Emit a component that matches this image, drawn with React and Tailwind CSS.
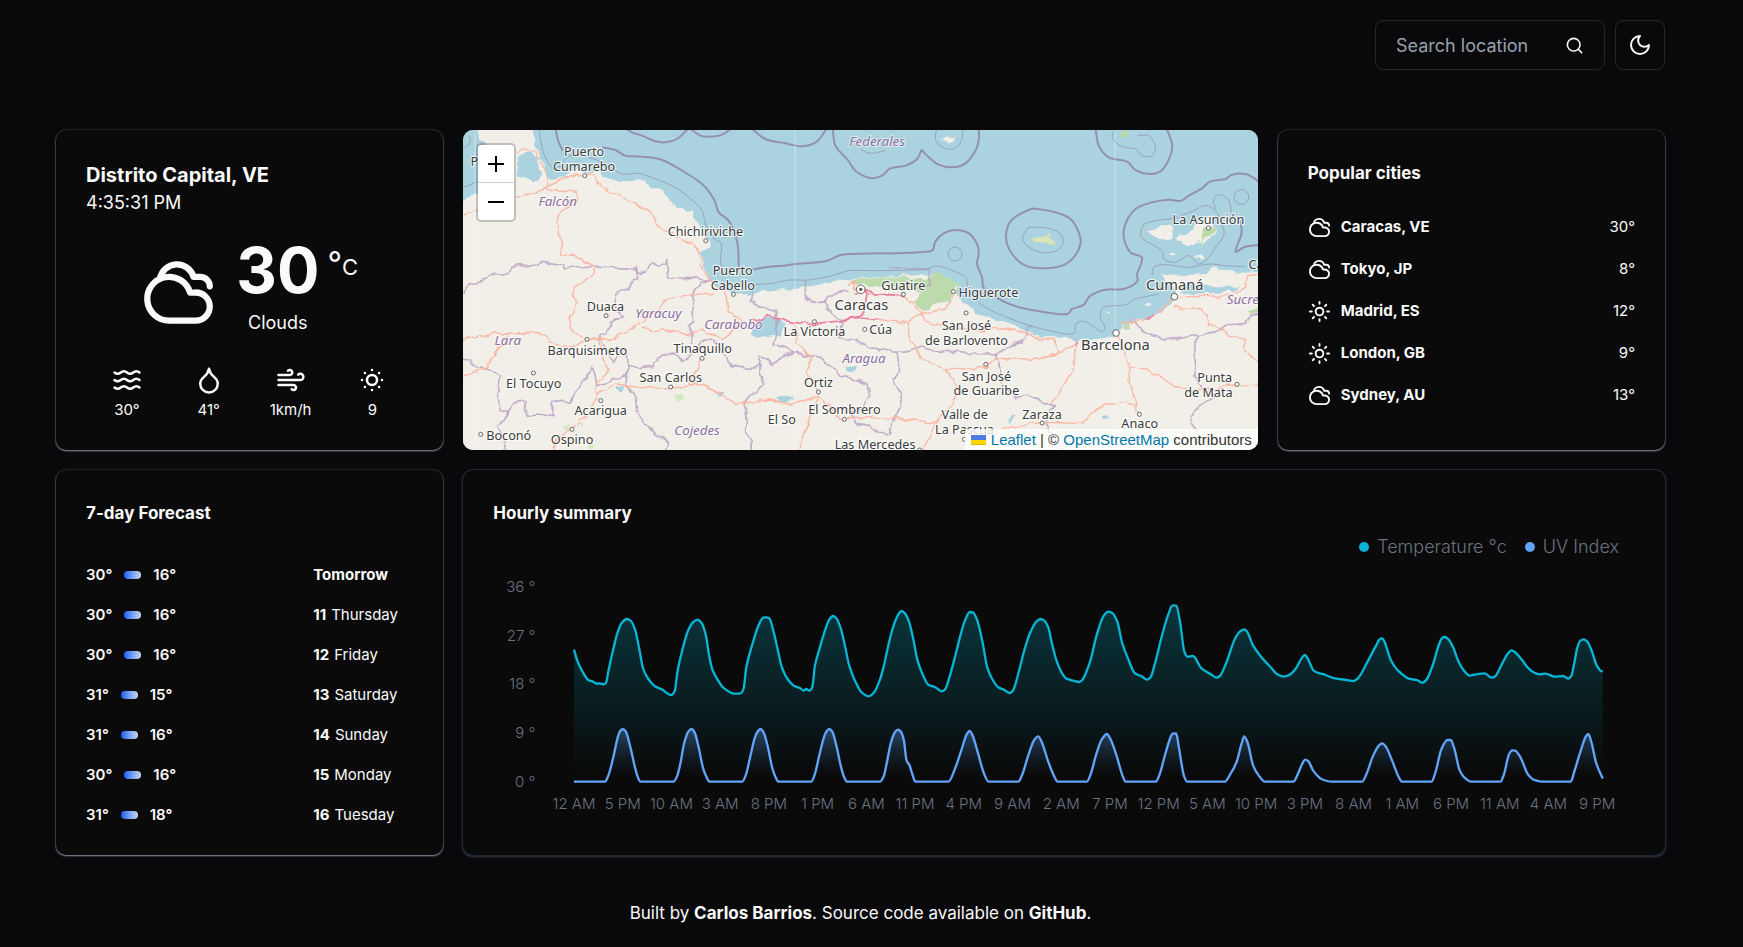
import React from "react";

/* ---------- icons ---------- */

function Icon({ className, strokeWidth = 2, children }) {
  return (
    <svg
      className={className}
      viewBox="0 0 24 24"
      fill="none"
      stroke="currentColor"
      strokeWidth={strokeWidth}
      strokeLinecap="round"
      strokeLinejoin="round"
      aria-hidden="true"
    >
      {children}
    </svg>
  );
}

const CloudyIcon = (props) => (
  <Icon {...props}>
    <path d="M17.5 21H9a7 7 0 1 1 6.71-9h1.79a4.5 4.5 0 1 1 0 9Z" />
    <path d="M22 10a3 3 0 0 0-3-3h-2.207a5.502 5.502 0 0 0-10.702.5" />
  </Icon>
);

const SunIcon = (props) => (
  <Icon {...props}>
    <circle cx="12" cy="12" r="4" />
    <path d="M12 2v2M12 20v2M4.93 4.93l1.41 1.41M17.66 17.66l1.41 1.41M2 12h2M20 12h2M6.34 17.66l-1.41 1.41M19.07 4.93l-1.41 1.41" />
  </Icon>
);

const SunDimIcon = (props) => (
  <Icon {...props}>
    <circle cx="12" cy="12" r="4" />
    <path d="M12 4h.01M20 12h.01M12 20h.01M4 12h.01M17.657 6.343h.01M17.657 17.657h.01M6.343 17.657h.01M6.343 6.343h.01" />
  </Icon>
);

const WavesIcon = (props) => (
  <Icon {...props}>
    <path d="M2 6c.6.5 1.2 1 2.5 1C7 7 7 5 9.5 5c2.6 0 2.4 2 5 2 2.5 0 2.5-2 5-2 1.3 0 1.9.5 2.5 1" />
    <path d="M2 12c.6.5 1.2 1 2.5 1 2.5 0 2.5-2 5-2 2.6 0 2.4 2 5 2 2.5 0 2.5-2 5-2 1.3 0 1.9.5 2.5 1" />
    <path d="M2 18c.6.5 1.2 1 2.5 1 2.5 0 2.5-2 5-2 2.6 0 2.4 2 5 2 2.5 0 2.5-2 5-2 1.3 0 1.9.5 2.5 1" />
  </Icon>
);

const DropletIcon = (props) => (
  <Icon {...props}>
    <path d="M12 22a7 7 0 0 0 7-7c0-2-1-3.9-3-5.5s-3.5-4-4-6.5c-.5 2.5-2 4.9-4 6.5C6 11.1 5 13 5 15a7 7 0 0 0 7 7z" />
  </Icon>
);

const WindIcon = (props) => (
  <Icon {...props}>
    <path d="M17.7 7.7a2.5 2.5 0 1 1 1.8 4.3H2" />
    <path d="M9.6 4.6A2 2 0 1 1 11 8H2" />
    <path d="M12.6 19.4A2 2 0 1 0 14 16H2" />
  </Icon>
);

const MoonIcon = (props) => (
  <Icon {...props}>
    <path d="M12 3a6 6 0 0 0 9 9 9 9 0 1 1-9-9Z" />
  </Icon>
);

const SearchIcon = (props) => (
  <Icon {...props}>
    <circle cx="11" cy="11" r="8" />
    <path d="m21 21-4.3-4.3" />
  </Icon>
);

/* ---------- map ---------- */

const LAND = [
  "60,0 232,0 232,30 240,80 265,120 275,165 292,178 320,172 340,155 370,145 400,158 430,150 455,175 500,182 540,180 570,180 590,200 620,215 650,240 670,262 690,275 715,270 720,300 745,335 765,365 768,380 740,390 735,405 745,435 765,480 775,490 800,515 850,520 890,522 920,512 980,505 1050,500 1120,487 1190,476 1290,468 1370,465 1440,460 1510,485 1500,520 1530,545 1560,575 1640,605 1700,622 1740,640 1760,655 1790,645 1830,655 1865,662 1905,655 1960,652 1985,640 2000,610 2040,598 2075,595 2115,570 2150,548 2165,515 2130,480 2115,460 2145,465 2200,462 2250,460 2275,440 2300,450 2350,457 2450,452 2450,1030 0,1030 0,240 24,238 68,215 110,170 90,70 75,60",
  "2075,335 2095,325 2120,310 2150,315 2152,345 2130,355 2085,350",
  "2160,350 2200,345 2210,310 2260,290 2285,330 2250,370 2225,365 2200,380 2170,362",
  "2137,402 2145,396 2160,398 2158,404",
  "2215,404 2235,404 2248,418 2240,423 2225,414",
  "1455,58 1475,54 1495,44 1492,66 1478,68",
  "735,385 768,375 768,382 740,392",
  "1956,576 1964,574 1962,584 1955,583",
  "2068,555 2080,548 2092,550 2075,560",
];

const WATER = [
  "184,105 225,95 248,108 250,145 258,160 245,180 230,190 212,172 184,168",
  "2170,503 2215,488 2255,492 2300,500 2345,500 2335,512 2290,516 2230,522 2180,518",
  "918,592 960,590 985,612 975,645 950,640 930,645 905,650 885,640",
  "480,800 500,796 512,800 495,812 482,808",
  "780,810 792,818 812,816 800,828 785,826",
  "960,832 985,822 1005,828 1018,838 985,842",
  "1655,905 1675,882 1688,880 1670,898 1658,908",
  "1175,738 1205,738 1200,750 1180,758",
  "1938,885 1950,880 1962,888 1945,892",
  "735,395 755,388 768,392 750,405 738,408",
];

const PARKS = [
  "1190,478 1320,470 1410,472 1440,458 1480,470 1512,487 1495,505 1480,540 1440,550 1405,572 1370,545 1400,520 1340,502 1205,493",
  "2245,320 2265,310 2285,330 2255,350 2240,370",
  "2000,612 2020,602 2018,622 2002,628",
  "2380,570 2430,556 2430,575 2385,580",
  "1995,40 2005,32 2022,42 2008,50",
];

const FIELDS = [
  "655,828 680,820 692,830 670,845",
  "322,910 345,915 340,930 325,930",
  "370,905 385,912 372,928",
  "395,975 415,970 412,990 398,990",
];

const SHELF = [
  "300,20 308,60 322,90",
  "440,80 480,88 510,105 560,108 620,118 680,150 740,190 775,235 790,275 820,300 840,345 848,380 850,440",
  "890,447 930,440 985,435 1020,430 1110,422 1160,402 1260,398 1320,398 1410,393 1432,388 1440,362 1465,338 1500,328 1540,338 1565,370 1570,400 1565,430 1580,470 1587,505 1640,540 1700,562 1825,581 1850,565 1885,552 1905,525 1950,507 2005,505 2045,483 2045,460 2060,412 2025,395 2005,350 2010,310 2040,265 2090,245 2140,237 2175,241 2200,225 2240,203 2265,182 2310,175 2330,162 2370,160 2400,175 2415,190",
  "505,20 530,35 560,45 595,60 630,65 665,55 700,22",
  "700,20 735,45 765,48 800,42 832,20",
  "885,20 930,55 990,68 1040,77 1085,62 1116,20",
  "1132,20 1140,75 1175,115 1200,150 1245,172 1280,165 1305,143 1350,135 1385,115 1398,87",
  "1398,87 1420,110 1450,132 1490,140 1530,128 1560,90 1571,50 1568,20",
  "1920,20 1930,75 1960,110 2015,123 2040,148 2085,160 2120,148 2145,105 2150,70 2132,20",
  "2355,300 2358,340 2340,392 2370,378 2415,373",
  "1720,268 1740,264 1800,275 1845,295 1870,335 1875,370 1855,410 1820,435 1765,443 1710,435 1670,400 1652,355 1660,310 1685,285 1720,268",
];

const SHELF_THIN = [
  "250,20 258,70 270,110 300,145 345,105 400,110 450,130 500,160 550,158 600,175 650,195 700,230 740,270 750,310 778,355 798,370 795,420 800,440",
  "890,492 950,488 1000,478 1060,478 1130,465 1180,450 1260,450 1400,447 1440,436 1480,445 1530,470 1540,510 1590,560 1680,600 1760,625 1850,640 1862,610 1890,603 1935,632 1948,620 1935,590 1945,560 2010,552 2040,535 2110,520",
  "1720,320 1775,322 1815,340 1822,370 1800,392 1755,395 1715,375 1702,350 1720,320",
  "2065,310 2100,300 2160,292 2190,280 2215,270 2250,255 2280,270 2300,310 2305,345 2280,380 2260,410 2230,430 2200,405 2160,425 2125,415 2120,390 2070,360 2055,340 2065,310",
  "2280,265 2275,235 2295,222 2320,240 2328,275",
  "1445,20 1440,55 1460,80 1495,84 1518,60 1522,20",
  "1985,20 1970,50 2000,78 2040,85 2060,105 2090,105 2100,75 2080,45 2045,45",
  "2090,465 2095,440 2130,432 2200,440 2260,430 2310,435 2370,438",
  "24,85 45,65 40,45",
  "24,200 50,190 66,180",
  "1215,85 1245,98 1290,90",
];

const STATES = [
  "10,520 24,515 40,490 80,483 110,458 145,460 170,440 200,432 220,438 265,425 300,432 325,430 330,445 370,440 440,440 545,443 550,455 575,455 585,432 632,430 634,415 637,475 700,470 765,480",
  "545,445 547,470 520,500 490,510 480,555 500,590 465,605 455,635 432,645 450,690 475,725 490,695 515,685 518,740 590,735 620,700 670,705 680,720 720,690 735,665 770,655 800,690 830,735 880,740 912,738 915,710 955,728 980,705 1020,695 1060,705 1100,710 1120,735 1150,760 1200,780 1235,790 1240,830 1220,860 1185,880 1200,905 1250,912 1270,938 1300,940 1320,900 1340,840 1315,780 1330,740 1325,695",
  "712,670 702,620 718,600 712,520 740,485 765,480",
  "518,740 515,790 540,830 545,880 575,920 645,970 625,1000",
  "515,765 470,775 425,795 412,740 375,800 340,845 295,840 290,888 250,880 205,885 215,840 175,845 155,880 135,870 122,820 138,765 95,745 60,740 45,718 10,715",
  "155,880 130,920 147,960 142,1000",
  "1020,695 985,680 953,670 965,620 965,570 930,562 900,555 888,540 892,512",
  "1050,480 1050,520 1070,545 1110,540 1150,515 1180,510",
  "1110,540 1115,565 1165,600 1150,650 1200,660 1240,680 1290,690 1345,692 1400,676 1440,690 1500,695 1560,700 1620,700 1665,675 1700,665 1727,615",
  "1620,700 1635,745 1640,790 1680,828 1715,820 1760,845 1800,855 1770,905 1790,950 1835,1000",
  "2035,595 2070,640 2130,660 2180,655 2230,645 2290,630 2320,610 2370,605 2385,585 2420,580",
  "2225,650 2212,690 2220,720 2215,770 2240,800 2275,830 2235,855 2207,885 2215,920 2245,960",
  "915,738 925,790 865,845 875,880 870,930 890,960 890,1000",
  "1300,440 1415,448 1425,490 1400,505",
];

const ROADS = [
  "182,92 240,90 255,120 280,165 275,205 330,210 365,215 368,240 320,270 300,310 320,360 322,402 380,412 418,445 415,465 355,500 360,550 342,600 355,640 395,655 440,655 475,655 515,628 545,620 600,575 640,530 720,522 775,515",
  "10,290 24,285 68,270",
  "182,230 275,200 340,165 410,160 440,200 470,215 520,235 575,270 620,325 690,360 730,385 735,430 765,480 808,520 815,575 860,600 800,660 740,625 700,640 660,630 600,632 560,622",
  "10,660 24,658 120,640 190,640 250,632 285,670 360,680 395,655",
  "10,770 24,765 90,745 125,690 165,635",
  "430,655 440,715 458,745 425,785 425,830 395,880 360,915 300,960 295,1000",
  "425,820 480,790 550,800 640,805 720,790 770,805 840,848 940,835 1010,853 1060,835 1090,830 1120,855 1160,895 1250,890 1340,895 1440,905",
  "740,712 705,790",
  "1025,610 1020,665 1070,710 1055,750 1090,830 1060,900 1028,1000",
  "1240,520 1300,520 1340,522 1400,578 1470,565 1495,520",
  "1240,590 1290,600 1355,605 1400,578 1410,605 1560,630 1640,622 1730,640 1760,660 1795,652 1812,700",
  "1355,605 1362,650 1395,710 1470,748 1590,740 1625,710 1650,718 1730,712 1810,700 1862,665 1850,750 1790,850",
  "1470,748 1510,800 1490,850 1440,905 1398,1000",
  "1550,960 1620,930 1680,915 1770,905 1880,908 1920,865 1990,848 2040,848 2042,880",
  "1985,640 2020,710 2025,790 2042,848",
  "2022,738 2090,755 2150,795 2220,812 2290,800 2340,795 2420,790",
  "1995,605 2060,600 2120,565 2155,528 2240,528 2320,525 2370,500 2378,465 2420,460",
  "2155,560 2240,565 2260,605 2315,635 2310,645 2370,660 2372,690 2420,730",
  "1185,490 1200,478 1195,500 1215,520",
];

const HIGHWAYS = [
  "890,602 940,585 985,600 1040,608 1080,608 1170,600 1210,585 1225,570 1235,520 1225,505 1250,512",
  "1200,520 1240,508 1260,520 1300,518 1350,525",
  "1165,600 1210,590 1270,592",
  "2070,590 2090,580",
  "1860,672 1870,662",
];

const MARKERS = [
  [388, 165], [751, 360], [834, 521], [452, 585], [395, 656], [740, 713], [646, 799],
  [234, 757], [436, 840], [76, 941], [350, 926], [1077, 603], [1089, 814], [1167, 896],
  [1344, 521], [1494, 513], [1532, 577], [1228, 626], [1591, 731], [1760, 907],
  [2052, 881], [2259, 322], [2345, 791], [1393, 988], [1527, 956],
];

const PLACES = [
  ["P", 57, 135], ["Puerto", 386, 106], ["Cumarebo", 386, 152], ["Chichiriviche", 750, 345],
  ["Puerto", 832, 462], ["Cabello", 832, 507], ["Duaca", 450, 570], ["Barquisimeto", 396, 702],
  ["Tinaquillo", 742, 698], ["San Carlos", 646, 785], ["El Tocuyo", 235, 801],
  ["Acarigua", 436, 884], ["Boconó", 160, 958], ["Ospino", 350, 970], ["La Victoria", 1077, 647],
  ["Ortiz", 1089, 800], ["El Sombrero", 1167, 881], ["El So", 979, 910],
  ["Las Mercedes", 1259, 984], ["Guatire", 1344, 507], ["Higuerote", 1599, 529],
  ["San José", 1533, 627], ["de Barlovento", 1533, 672], ["Cúa", 1276, 641],
  ["San José", 1593, 781], ["de Guaribe", 1593, 824], ["Valle de", 1528, 896],
  ["La Pascua", 1527, 941], ["Zaraza", 1760, 894], ["Anaco", 2053, 922],
  ["La Asunción", 2259, 310], ["Punta", 2278, 783], ["de Mata", 2259, 828], ["Ca", 2402, 444],
];

const CITIES = [["Caracas", 1218, 568], ["Barcelona", 1980, 687], ["Cumaná", 2158, 509]];

const REGIONS = [
  ["Falcón", 307, 256], ["Yaracuy", 609, 593], ["Carabobo", 834, 625], ["Lara", 157, 672],
  ["Cojedes", 725, 942], ["Aragua", 1226, 727], ["Federales", 1265, 77], ["Sucre", 2362, 550],
];

function Lines({ items, stroke, width, opacity }) {
  return (
    <g fill="none" stroke={stroke} strokeWidth={width} strokeOpacity={opacity} strokeLinejoin="round" strokeLinecap="round">
      {items.map((points) => (
        <polyline key={points} points={points} />
      ))}
    </g>
  );
}

// Catmull-Rom spline through a list of "x,y" points.
function smooth(points) {
  const p = points.split(" ").map((pair) => pair.split(",").map(Number));
  let d = `M${p[0][0]},${p[0][1]}`;
  for (let i = 0; i < p.length - 1; i++) {
    const a = p[i - 1] || p[i];
    const b = p[i];
    const c = p[i + 1];
    const e = p[i + 2] || c;
    d += `C${b[0] + (c[0] - a[0]) / 6},${b[1] + (c[1] - a[1]) / 6} ${c[0] - (e[0] - b[0]) / 6},${c[1] - (e[1] - b[1]) / 6} ${c[0]},${c[1]}`;
  }
  return d;
}

function Curves({ items, stroke, width, opacity }) {
  return (
    <g fill="none" stroke={stroke} strokeWidth={width} strokeOpacity={opacity} strokeLinejoin="round">
      {items.map((points) => (
        <path key={points} d={smooth(points)} />
      ))}
    </g>
  );
}

function MapLabels({ items, className }) {
  return items.map(([name, x, y]) => (
    <text key={name + x + y} x={x} y={y} textAnchor="middle" className={className}>
      {name}
    </text>
  ));
}

function CityMap() {
  return (
    <section aria-label="Map" className="relative min-h-80 overflow-hidden rounded-[10px] bg-[#aad3df] lg:col-span-2">
      <svg
        viewBox="22 28 2385 960"
        preserveAspectRatio="xMidYMid slice"
        className="absolute inset-0 h-full w-full"
        role="img"
        aria-label="Street map around Caracas"
      >
        <defs>
          <filter id="terrain" filterUnits="userSpaceOnUse" x="0" y="0" width="2450" height="1030" colorInterpolationFilters="sRGB">
            <feTurbulence type="fractalNoise" baseFrequency="0.03" numOctaves="2" seed="4" result="noise" />
            <feDisplacementMap in="SourceGraphic" in2="noise" scale="22" xChannelSelector="R" yChannelSelector="G" />
          </filter>
        </defs>
        <rect x="0" y="0" width="2450" height="1030" fill="#aad3df" />
        <g filter="url(#terrain)">
          <g fill="#f2efe9">
            {LAND.map((p) => <polygon key={p} points={p} />)}
          </g>
          <polygon points="1727,358 1745,345 1775,343 1800,360 1798,370 1770,366" fill="#dde3b4" />
          <g fill="#bcdaab">
            {PARKS.map((p) => <polygon key={p} points={p} />)}
          </g>
          <g fill="#d3e8c4">
            {FIELDS.map((p) => <polygon key={p} points={p} />)}
          </g>
          <g fill="#aad3df">
            {WATER.map((p) => <polygon key={p} points={p} />)}
          </g>
          <Lines items={STATES} stroke="#b79fc0" width={5} opacity={0.8} />
          <Lines items={ROADS} stroke="#fcb5a0" width={4} />
          <Lines items={HIGHWAYS} stroke="#ec7f9d" width={5} />
        </g>
        <Curves items={SHELF_THIN} stroke="#8f80aa" width={3} opacity={0.6} />
        <circle cx="1499" cy="400" r="21" fill="none" stroke="#8f80aa" strokeOpacity="0.6" strokeWidth="3" />
        <circle cx="2358" cy="229" r="22" fill="none" stroke="#8f80aa" strokeOpacity="0.6" strokeWidth="3" />
        <Curves items={SHELF} stroke="#9284ac" width={6} opacity={0.85} />
        <g stroke="#ffffff" strokeOpacity="0.6" strokeWidth="2">
          <line x1="59" y1="20" x2="59" y2="990" />
          <line x1="1019" y1="20" x2="1019" y2="990" />
          <line x1="1979" y1="20" x2="1979" y2="990" />
        </g>
        <g fill="#ffffff" stroke="#666666" strokeWidth="3">
          {MARKERS.map(([x, y]) => <circle key={x} cx={x} cy={y} r="6" />)}
          <circle cx="1982" cy="637" r="10" />
          <circle cx="2157" cy="528" r="10" />
          <circle cx="1216" cy="506" r="13" />
        </g>
        <circle cx="1216" cy="506" r="5" fill="#555555" />
        <g
          fill="#3c3c3c"
          stroke="#ffffff"
          strokeOpacity="0.75"
          strokeWidth="7"
          strokeLinejoin="round"
          paintOrder="stroke"
        >
          <MapLabels items={PLACES} className="font-['Noto_Sans',sans-serif] text-[38px]" />
          <MapLabels items={CITIES} className="font-['Noto_Sans',sans-serif] text-[44px]" />
        </g>
        <g
          fill="#8d6c9f"
          stroke="#ffffff"
          strokeOpacity="0.6"
          strokeWidth="6"
          strokeLinejoin="round"
          paintOrder="stroke"
        >
          <MapLabels items={REGIONS} className="font-['Noto_Sans',sans-serif] text-[40px] italic" />
        </g>
      </svg>

      <div className="absolute left-[13px] top-[13px] flex w-10 flex-col overflow-hidden rounded-[5px] border-2 border-black/20 bg-white bg-clip-padding text-black">
        <button type="button" aria-label="Zoom in" className="flex h-[38px] items-center justify-center border-b border-[#cccccc]">
          <svg viewBox="0 0 16 16" className="size-4" stroke="currentColor" strokeWidth="2" aria-hidden="true">
            <path d="M8 0v16M0 8h16" />
          </svg>
        </button>
        <button type="button" aria-label="Zoom out" className="flex h-[37px] items-center justify-center">
          <svg viewBox="0 0 16 16" className="size-4" stroke="currentColor" strokeWidth="2" aria-hidden="true">
            <path d="M0 8h16" />
          </svg>
        </button>
      </div>

      <div className="absolute bottom-0 right-0 flex h-[21px] items-center gap-[5px] bg-white/80 px-[6px] font-['Liberation_Sans',Arial,sans-serif] text-[15px] leading-[21px] text-[#333333]">
        <svg viewBox="0 0 15 10" className="h-[10px] w-[15px]" aria-hidden="true">
          <path fill="#4c7be1" d="M0 0h15v5H0z" />
          <path fill="#ffd500" d="M0 5h15v4H0z" />
          <path fill="#e0bc00" d="M0 9h15v1H0z" />
        </svg>
        <span>
          <a href="#leaflet" className="text-[#0078a8]">Leaflet</a>
          {" | © "}
          <a href="#openstreetmap" className="text-[#0078a8]">OpenStreetMap</a>
          {" contributors"}
        </span>
      </div>
    </section>
  );
}

/* ---------- chart ---------- */

const TEMPERATURE = [
  357,567, 368,603, 380,628, 401,659, 413,662, 424,669, 435,668, 446,671, 453,667, 461,627, 475,565, 488,515,
  500,487, 515,475, 527,480, 540,506, 552,560, 564,622, 574,645, 587,664, 600,677, 620,686, 649,703, 659,692,
  668,630, 682,568, 700,508, 715,484, 728,477, 740,487, 753,525, 762,582, 772,626, 785,652, 805,681, 838,699,
  857,698, 866,684, 874,620, 893,548, 910,496, 925,471, 934,470, 943,473, 955,510, 968,565, 980,617, 998,655,
  1018,676, 1035,682, 1046,690, 1054,685, 1063,690, 1072,680, 1080,615, 1095,560, 1110,510, 1123,477, 1134,466,
  1144,472, 1157,502, 1170,555, 1183,615, 1200,660, 1220,695, 1242,707, 1258,695, 1275,657, 1287,615, 1300,555,
  1315,498, 1330,462, 1340,451, 1350,458, 1363,485, 1375,535, 1388,600, 1405,645, 1420,672, 1440,679, 1460,692,
  1470,687, 1485,645, 1500,590, 1515,530, 1530,480, 1545,454, 1555,456, 1568,482, 1583,545, 1597,620, 1612,655,
  1630,680, 1650,689, 1664,697, 1674,690, 1690,640, 1708,570, 1725,518, 1745,482, 1757,475, 1768,480, 1780,500,
  1792,552, 1805,600, 1820,635, 1835,654, 1855,660, 1873,664, 1882,658, 1905,605, 1925,525, 1945,468, 1960,453,
  1972,457, 1987,482, 2002,547, 2020,595, 2040,638, 2060,647, 2077,657, 2087,650, 2100,610, 2120,530, 2140,462,
  2153,434, 2164,435, 2175,480, 2189,575, 2198,588, 2214,586, 2240,623, 2270,642, 2285,651, 2295,646, 2315,605,
  2340,535, 2355,513, 2368,506, 2376,512, 2395,555, 2420,590, 2445,617, 2468,641, 2487,648, 2505,642, 2522,625,
  2540,594, 2550,583, 2559,594, 2575,628, 2590,637, 2603,640, 2640,653, 2675,658, 2697,661, 2710,652, 2740,600,
  2762,558, 2775,536, 2782,533, 2789,543, 2808,598, 2830,630, 2865,655, 2885,658, 2903,666, 2915,657, 2935,610,
  2952,553, 2962,532, 2970,529, 2980,535, 2995,560, 3010,600, 3030,633, 3045,645, 3063,641, 3090,638, 3110,651,
  3120,648, 3140,613, 3160,578, 3170,569, 3180,574, 3200,596, 3222,624, 3240,637, 3254,641, 3272,639, 3300,648,
  3325,646, 3341,654, 3350,645, 3358,610, 3368,560, 3377,540, 3387,536, 3397,542, 3410,568, 3425,612, 3437,630,
  3444,633,
];

const UV_INDEX = [
  357,963, 450,963, 460,945, 475,890, 487,835, 495,812, 503,805, 512,812, 525,855, 540,920, 548,948, 556,963,
  656,963, 667,945, 677,905, 687,850, 700,813, 710,805, 719,815, 731,860, 745,925, 755,950, 763,963, 862,963,
  873,942, 887,883, 900,830, 910,810, 917,805, 926,815, 938,856, 952,922, 962,950, 970,963, 1069,963, 1079,943,
  1093,885, 1107,830, 1115,812, 1123,805, 1132,813, 1145,858, 1158,918, 1167,948, 1176,963, 1276,963, 1286,948,
  1295,910, 1307,850, 1320,815, 1329,807, 1338,813, 1347,840, 1355,900, 1363,912, 1373,943, 1381,963, 1481,963,
  1500,925, 1520,867, 1535,822, 1544,811, 1552,822, 1570,880, 1587,938, 1601,963, 1690,963, 1702,942, 1720,885,
  1738,838, 1750,827, 1760,843, 1780,903, 1797,945, 1808,963, 1896,963, 1907,942, 1923,885, 1940,838, 1956,820,
  1967,836, 1985,885, 2003,945, 2012,963, 2103,963, 2113,945, 2130,885, 2147,830, 2153,819, 2164,818, 2172,860,
  2188,948, 2197,963, 2310,963, 2325,943, 2345,905, 2360,850, 2368,827, 2378,845, 2395,915, 2412,945, 2430,963,
  2516,963, 2527,945, 2542,910, 2551,897, 2560,901, 2575,930, 2600,955, 2630,963, 2722,963, 2735,940, 2755,885,
  2772,855, 2782,848, 2793,858, 2812,900, 2832,950, 2842,963, 2930,963, 2942,935, 2960,865, 2978,838, 2988,838,
  2998,862, 3015,930, 3030,952, 3048,963, 3137,963, 3147,943, 3163,880, 3172,869, 3181,870, 3197,890, 3220,942,
  3238,958, 3260,963, 3348,963, 3358,935, 3378,870, 3393,828, 3401,820, 3410,845, 3425,910, 3444,954,
];

const HOURS = [
  "12 AM", "5 PM", "10 AM", "3 AM", "8 PM", "1 PM", "6 AM", "11 PM", "4 PM", "9 AM", "2 AM",
  "7 PM", "12 PM", "5 AM", "10 PM", "3 PM", "8 AM", "1 AM", "6 PM", "11 AM", "4 AM", "9 PM",
];

const DEGREES = [36, 27, 18, 9, 0];

// Monotone cubic interpolation, so the curve never overshoots its samples.
function curve(flat) {
  const pts = [];
  for (let i = 0; i < flat.length; i += 2) pts.push([flat[i], flat[i + 1]]);
  const n = pts.length;
  const slope = [];
  for (let i = 0; i < n - 1; i++) {
    slope.push((pts[i + 1][1] - pts[i][1]) / (pts[i + 1][0] - pts[i][0]));
  }
  const tangent = [slope[0]];
  for (let i = 1; i < n - 1; i++) {
    const a = slope[i - 1];
    const b = slope[i];
    tangent.push(a * b <= 0 ? 0 : (2 * a * b) / (a + b));
  }
  tangent.push(slope[n - 2]);
  let d = `M${pts[0][0]},${pts[0][1]}`;
  for (let i = 0; i < n - 1; i++) {
    const [x0, y0] = pts[i];
    const [x1, y1] = pts[i + 1];
    const h = (x1 - x0) / 3;
    d += `C${x0 + h},${y0 + tangent[i] * h} ${x1 - h},${y1 - tangent[i + 1] * h} ${x1},${y1}`;
  }
  return d;
}

function HourlyChart() {
  const temperature = curve(TEMPERATURE);
  const uv = curve(UV_INDEX);
  return (
    <svg viewBox="114 337 3426 740" className="block w-full" role="img" aria-label="Hourly temperature and UV index">
      <defs>
        <linearGradient id="temperature-fill" gradientUnits="userSpaceOnUse" x1="0" y1="434" x2="0" y2="963">
          <stop offset="5%" stopColor="#06b6d4" stopOpacity="0.24" />
          <stop offset="95%" stopColor="#06b6d4" stopOpacity="0" />
        </linearGradient>
        <linearGradient id="uv-fill" gradientUnits="userSpaceOnUse" x1="0" y1="805" x2="0" y2="963">
          <stop offset="5%" stopColor="#60a5fa" stopOpacity="0.32" />
          <stop offset="95%" stopColor="#0a0a0a" stopOpacity="0.1" />
        </linearGradient>
      </defs>
      <path d={`${temperature}V963H357Z`} fill="url(#temperature-fill)" />
      <path d={temperature} fill="none" stroke="#06b6d4" strokeWidth="7" strokeLinejoin="round" />
      <path d={`${uv}V963H357Z`} fill="url(#uv-fill)" />
      <path d={uv} fill="none" stroke="#60a5fa" strokeWidth="7" strokeLinejoin="round" />
      <g className="fill-gray-500 text-[45px] font-light">
        {DEGREES.map((deg, i) => (
          <text key={deg} x="241" y={394 + i * 146} textAnchor="end">{`${deg} °`}</text>
        ))}
        {HOURS.map((hour, i) => (
          <text key={hour} x={357 + i * 146.2} y="1045" textAnchor="middle">{hour}</text>
        ))}
      </g>
    </svg>
  );
}

/* ---------- cards ---------- */

const card =
  "rounded-[10px] bg-[#0a0a0a] px-[30px] pt-[30px] shadow-[0_1px_2px_0_#8492a6,0_0_0_1px_#1a1c20]";

const STATS = [
  { Glyph: WavesIcon, value: "30°", label: "Feels like" },
  { Glyph: DropletIcon, value: "41°", label: "Humidity" },
  { Glyph: WindIcon, value: "1km/h", label: "Wind" },
  { Glyph: SunDimIcon, value: "9", label: "UV index" },
];

const POPULAR = [
  { Glyph: CloudyIcon, city: "Caracas, VE", temp: "30°" },
  { Glyph: CloudyIcon, city: "Tokyo, JP", temp: "8°" },
  { Glyph: SunIcon, city: "Madrid, ES", temp: "12°" },
  { Glyph: SunIcon, city: "London, GB", temp: "9°" },
  { Glyph: CloudyIcon, city: "Sydney, AU", temp: "13°" },
];

const FORECAST = [
  { max: "30°", min: "16°", name: "Tomorrow" },
  { max: "30°", min: "16°", date: "11", name: "Thursday" },
  { max: "30°", min: "16°", date: "12", name: "Friday" },
  { max: "31°", min: "15°", date: "13", name: "Saturday" },
  { max: "31°", min: "16°", date: "14", name: "Sunday" },
  { max: "30°", min: "16°", date: "15", name: "Monday" },
  { max: "31°", min: "18°", date: "16", name: "Tuesday" },
];

function CardTitle({ children }) {
  return <h2 className="text-[17px] font-bold leading-[26px]">{children}</h2>;
}

function CurrentWeather() {
  return (
    <section className={`${card} flex min-h-80 flex-col pb-[30px]`}>
      <h1 className="text-xl font-bold leading-[30px]">Distrito Capital, VE</h1>
      <p className="text-lg leading-[26px]">4:35:31 PM</p>
      <div className="mt-[22px] flex items-center justify-center gap-5">
        <CloudyIcon className="mt-[10px] size-[75px]" />
        <div className="flex items-start gap-2">
          <div className="flex flex-col items-center">
            <span className="text-[63px] font-bold leading-[64px]">30</span>
            <span className="mt-2 text-lg leading-[26px]">Clouds</span>
          </div>
          <span className="pt-2 text-[22px] leading-9">
            <span className="text-[32px]">°</span>C
          </span>
        </div>
      </div>
      <ul className="mt-auto grid grid-cols-4">
        {STATS.map(({ Glyph, value, label }) => (
          <li key={label} title={label} className="flex flex-col items-center gap-[5px]">
            <Glyph className="size-[30px]" />
            <span className="text-[15px] leading-5">{value}</span>
          </li>
        ))}
      </ul>
    </section>
  );
}

function PopularCities() {
  return (
    <section className={`${card} pb-[30px]`}>
      <CardTitle>Popular cities</CardTitle>
      <ul className="mt-5">
        {POPULAR.map(({ Glyph, city, temp }) => (
          <li key={city} className="flex h-[42px] items-center gap-[10px] text-[15px]">
            <Glyph className="size-[23px]" />
            <span className="flex-1 font-bold">{city}</span>
            <span>{temp}</span>
          </li>
        ))}
      </ul>
    </section>
  );
}

function Forecast() {
  return (
    <section className={`${card} pb-5`}>
      <CardTitle>7-day Forecast</CardTitle>
      <ul className="mt-[29px]">
        {FORECAST.map(({ max, min, date, name }) => (
          <li key={name} className="flex h-10 items-center justify-between text-[15px]">
            <span className="flex items-center gap-3 font-semibold">
              {max}
              <span className="h-2 w-[17px] rounded-full bg-linear-to-r from-blue-600 to-slate-300" />
              {min}
            </span>
            <span className="flex w-[100px] gap-[5px]">
              {date && <b className="font-bold">{date}</b>}
              <span className={date ? "" : "font-bold"}>{name}</span>
            </span>
          </li>
        ))}
      </ul>
    </section>
  );
}

function HourlySummary() {
  return (
    <section className="rounded-[10px] bg-[#0a0a0a] px-[30px] pb-5 pt-[30px] shadow-[0_0_0_1px_#1f2732,0_1px_2px_1px_#303a47] lg:col-span-3">
      <CardTitle>Hourly summary</CardTitle>
      <div className="mt-2 flex justify-end gap-[18px] pr-4 text-lg font-light leading-[26px] text-gray-500">
        <span className="flex items-center gap-2">
          <span className="size-[10px] rounded-full bg-[#06b6d4]" />
          Temperature °c
        </span>
        <span className="flex items-center gap-2">
          <span className="size-[10px] rounded-full bg-[#60a5fa]" />
          UV Index
        </span>
      </div>
      <div className="mt-[13px]">
        <HourlyChart />
      </div>
    </section>
  );
}

export default function App() {
  return (
    <div className="min-h-screen bg-[#09090b] pl-14 pr-[78px] font-[Inter,sans-serif] text-neutral-50">
      <header className="flex justify-end gap-[10px] pt-5">
        <form role="search" className="flex h-[50px] w-[230px] items-center rounded-lg border border-[#26262a] px-5">
          <input
            type="search"
            aria-label="Search location"
            placeholder="Search location"
            className="min-w-0 flex-1 bg-transparent pt-0.5 text-lg outline-none placeholder:text-gray-400"
          />
          <button type="submit" aria-label="Search">
            <SearchIcon className="size-[19px]" />
          </button>
        </form>
        <button
          type="button"
          aria-label="Toggle theme"
          className="flex size-[50px] items-center justify-center rounded-lg border border-[#26262a]"
        >
          <MoonIcon className="size-6" />
        </button>
      </header>

      <main className="grid grid-cols-1 gap-5 pt-[60px] lg:grid-cols-4">
        <CurrentWeather />
        <CityMap />
        <PopularCities />
        <Forecast />
        <HourlySummary />
      </main>

      <footer className="pb-4 pt-[45px] text-center text-[17px] leading-[26px]">
        Built by{" "}
        <a href="#author" className="font-bold">Carlos Barrios</a>. Source code available on{" "}
        <a href="#github" className="font-bold">GitHub</a>.
      </footer>
    </div>
  );
}
